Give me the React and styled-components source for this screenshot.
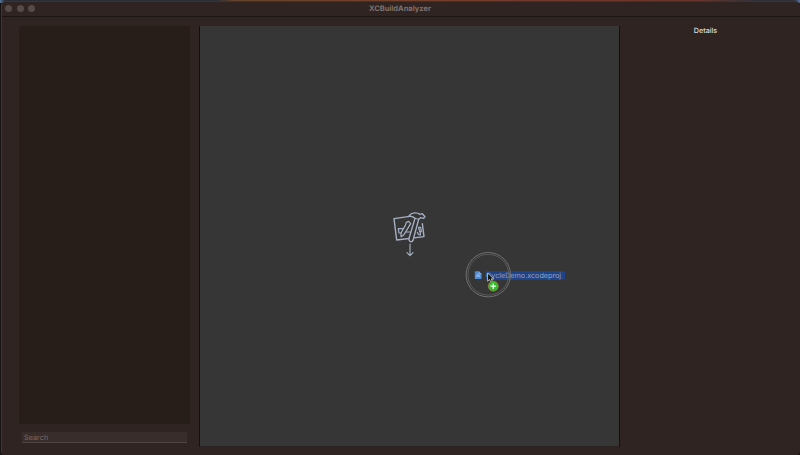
import React from "react";
import styled, { createGlobalStyle } from "styled-components";

const GlobalStyle = createGlobalStyle`
  * { box-sizing: border-box; }
  body { margin: 0; background: #15110f; font-family: Inter, "Liberation Sans", sans-serif; text-rendering: geometricPrecision; }
`;

const Desktop = styled.div`
  width: 800px;
  height: 455px;
  padding: 1px 0 0 1px;
  overflow: hidden;
  background: linear-gradient(90deg, #53749b 0, #292d35 5px, #292d35 215px, #65432a 235px, #75402a 400px, #70352a 600px, #65352b 700px, #303038 755px, #303038 794px, #5272a0 800px) top / 100% 3px no-repeat #171312;
`;

const Window = styled.main`
  height: 454px;
  display: flex;
  flex-direction: column;
  background: #2f2422;
  border-top: 1px solid #3b3231;
  border-left: 1px solid #423634;
  border-radius: 5px 5px 4px 4px;
  overflow: hidden;
`;

const TitleBar = styled.header`
  height: 15px;
  flex: none;
  display: grid;
  grid-template-columns: 1fr auto 1fr;
  align-items: center;
  border-bottom: 1px solid #1b1514;
  padding: 0 2px 1px 0;
`;

const WindowControls = styled.div`
  display: flex;
  gap: 4.5px;
  padding-left: 3px;
`;

const Control = styled.span`
  width: 7px;
  height: 7px;
  border-radius: 50%;
  background: #574b47;
`;

const Title = styled.h1`
  margin: 0;
  font-size: 7.5px;
  line-height: 10px;
  font-weight: 700;
  letter-spacing: 0;
  color: #7d716e;
`;

const Content = styled.div`
  flex: 1;
  min-height: 0;
  display: grid;
  grid-template-columns: 171px 421px 1fr;
  column-gap: 9px;
  padding: 9px 0 8px 17px;
`;

const Sidebar = styled.aside`
  display: flex;
  flex-direction: column;
  gap: 8px;
`;

const TargetList = styled.div`
  height: 398px;
  background: #281e19;
`;

const SearchField = styled.input.attrs({ type: "text", placeholder: "Search" })`
  appearance: none;
  width: 165px;
  height: 11px;
  margin: 0 3px;
  padding: 0 2px;
  border: 0;
  border-bottom: 1px solid #514542;
  border-radius: 0;
  outline: none;
  background: #382d2a;
  font: 7.3px Inter, sans-serif;
  text-rendering: geometricPrecision;
  color: #8b7e7a;
  &::placeholder { color: #7c6b67; opacity: 1; }
`;

const Canvas = styled.section`
  position: relative;
  height: 421px;
  background: #363636;
  border-left: 1px solid #130f0e;
  border-right: 1px solid #130f0e;
  border-bottom: 1px solid #2b2423;
`;

const ProjectDrawing = styled.svg`
  position: absolute;
  left: 180px;
  top: 174px;
  width: 60px;
  height: 64px;
`;

const DraggedProject = styled.div`
  position: absolute;
  left: 260px;
  top: 219px;
  width: 112px;
  height: 60px;
`;

const FileName = styled.span`
  position: absolute;
  left: 25px;
  top: 26px;
  width: 80px;
  height: 9px;
  padding-left: 1px;
  border-radius: 2px;
  background: #1d438b;
  color: #96a1b8;
  font-size: 7.2px;
  line-height: 9px;
  white-space: nowrap;
`;

const DragOverlay = styled.svg`
  position: absolute;
  inset: 0;
  width: 112px;
  height: 60px;
`;

const Details = styled.aside`
  text-align: center;
`;

const DetailsTitle = styled.h2`
  margin: 0;
  padding-right: 18px;
  font-size: 7.2px;
  line-height: 10px;
  font-weight: 500;
  color: #dfdbd9;
`;

function XcodeDropIcon() {
  return (
    <ProjectDrawing viewBox="0 0 180 192" fill="none" stroke="#a5afc3" strokeWidth="4.2" strokeLinecap="round" strokeLinejoin="round">
      <path d="M89 49 42 56 50 120 132 110 127 71" />
      <path d="M86 64 79 67 76 76 63 99 63 110 72 104 92 71 86 64Z" strokeWidth="3.6" />
      <path d="M68 86H55L57 99H64M79 96H91M112 97 115 103 121 105V99L116 84M116 82H122L124 95H119" strokeWidth="3.6" />
      <path d="M87 48C95 36 112 37 120 43L127 41 135 50 131 55 122 53 116 58 99 121Q96 127 90 124 85 121 87 115L105 55C99 49 94 50 87 48Z" fill="#363636" />
      <path d="M105 55 116 58" strokeWidth="3" />
      <path d="M90 132V166M81 158 90 167 99 158" strokeWidth="3.4" />
    </ProjectDrawing>
  );
}

function DragCursor() {
  return (
    <DragOverlay viewBox="0 0 112 60" fill="none">
      <circle cx="28.3" cy="29.7" r="22.2" stroke="#717171" strokeWidth="1" />
      <circle cx="28.3" cy="29.7" r="20.4" stroke="#636363" strokeWidth="0.8" />
      <path d="M14.8 26.3H19L21.5 28.8V34H14.8Z" fill="#4c8bd8" />
      <path d="M16.3 32.3 18 29 20 32.3M16 31.1H20.3M19 26.6V28.8H21.5" stroke="#b4d1f0" strokeWidth=".6" />
      <path d="M27.6 28V36.2L29.5 34.5 31 37.4 32.4 36.7 31.2 33.9H33.7Z" fill="#111" stroke="#d5d5d5" strokeWidth=".8" />
      <circle cx="33.3" cy="41.2" r="5" fill="#2fbd2a" stroke="#a77a48" strokeWidth=".7" />
      <path d="M30.5 41.2H36.1M33.3 38.4V44" stroke="#fff" strokeWidth="1.3" />
    </DragOverlay>
  );
}

export default function App() {
  return (
    <Desktop>
      <GlobalStyle />
      <Window>
        <TitleBar>
          <WindowControls><Control /><Control /><Control /></WindowControls>
          <Title>XCBuildAnalyzer</Title>
        </TitleBar>
        <Content>
          <Sidebar>
            <TargetList />
            <SearchField aria-label="Search" />
          </Sidebar>
          <Canvas>
            <XcodeDropIcon />
            <DraggedProject>
              <FileName>CycleDemo.xcodeproj</FileName>
              <DragCursor />
            </DraggedProject>
          </Canvas>
          <Details><DetailsTitle>Details</DetailsTitle></Details>
        </Content>
      </Window>
    </Desktop>
  );
}
